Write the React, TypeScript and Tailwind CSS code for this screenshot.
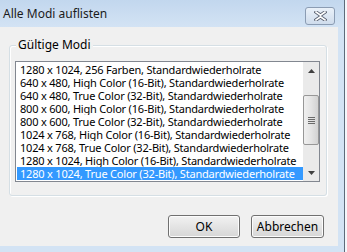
import React from "react";

const modes = [
  "1280 x 1024, 256 Farben, Standardwiederholrate",
  "640 x 480, High Color (16-Bit), Standardwiederholrate",
  "640 x 480, True Color (32-Bit), Standardwiederholrate",
  "800 x 600, High Color (16-Bit), Standardwiederholrate",
  "800 x 600, True Color (32-Bit), Standardwiederholrate",
  "1024 x 768, High Color (16-Bit), Standardwiederholrate",
  "1024 x 768, True Color (32-Bit), Standardwiederholrate",
  "1280 x 1024, High Color (16-Bit), Standardwiederholrate",
  "1280 x 1024, True Color (32-Bit), Standardwiederholrate",
];

const font = { fontFamily: '"Noto Sans", "Open Sans", sans-serif' };

export default function App() {
  return (
    <div
      className="flex h-[252px] w-[347px] overflow-hidden bg-white text-[12px] text-black"
      style={font}
    >
      <div className="flex w-[344px] flex-col bg-[#d3e3f4]">
        {/* title bar */}
        <div className="flex h-[27px] items-start bg-gradient-to-b from-[#c2d7ee] to-[#d3e3f4] pl-[3px]">
          <span className="mt-[6px] text-[12px] leading-[15px] text-[#1b1b1b]">Alle Modi auflisten</span>
          <div className="ml-auto mr-[9px] mt-[7px] flex h-[18px] w-[30px] items-center justify-center rounded-[3px] border border-[#8b9cb3] bg-gradient-to-b from-[#eaf1f9] to-[#cfdcec]">
            <svg width="13" height="10" viewBox="0 0 13 10">
              <path
                d="M2 1 L6.5 4.2 L11 1 M2 9 L6.5 5.8 L11 9"
                stroke="#5a6272"
                strokeWidth="3.4"
                fill="none"
                strokeLinecap="square"
              />
              <path
                d="M2 1 L6.5 4.2 L11 1 M2 9 L6.5 5.8 L11 9"
                stroke="#ffffff"
                strokeWidth="1.6"
                fill="none"
                strokeLinecap="square"
              />
            </svg>
          </div>
        </div>
        {/* client */}
        <div className="flex h-[219px] w-[338px] flex-col bg-[#f0f0f0]">
          {/* group box */}
          <div className="relative ml-[9px] mt-[18px] h-[151px] w-[318px] rounded-[3px] border border-[#d5dfe5] shadow-[inset_1px_1px_0_#ffffff,1px_1px_0_#ffffff]">
            <span className="absolute left-[6px] top-[-9px] bg-[#f0f0f0] px-[2px] text-[12px] leading-[15px] text-black">
              Gültige Modi
            </span>
            <div className="ml-[5px] mt-[15px] flex h-[121px] w-[305px] border border-[#828790] bg-white">
              <div className="flex flex-1 flex-col overflow-hidden py-[1px] pl-[1px]">
                {modes.map((m, i) => {
                  const sel = i === modes.length - 1;
                  return (
                    <div
                      key={i}
                      className={
                        sel
                          ? "h-[13px] overflow-hidden whitespace-nowrap bg-[#3399ff] pl-[3px] text-[11px] leading-[13px] tracking-[-0.2px] text-white"
                          : "h-[13px] overflow-hidden whitespace-nowrap pl-[3px] text-[11px] leading-[13px] tracking-[-0.2px] text-black"
                      }
                    >
                      {m}
                    </div>
                  );
                })}
              </div>
              {/* scrollbar */}
              <div className="flex w-[16px] flex-col bg-[#eaeaea]">
                <div className="flex h-[17px] items-center justify-center">
                  <svg width="7" height="4" viewBox="0 0 7 4">
                    <path d="M0 4 L3.5 0 L7 4 Z" fill="#404040" />
                  </svg>
                </div>
                <div className="mt-[16px] flex h-[50px] items-center justify-center rounded-[2px] border border-[#979797] bg-gradient-to-r from-[#f0f0f0] via-[#e4e4e4] to-[#d2d2d2]">
                  <div className="flex flex-col gap-[1px]">
                    <div className="h-[1px] w-[7px] bg-[#6a6a6a]" />
                    <div className="h-[1px] w-[7px] bg-[#6a6a6a]" />
                    <div className="h-[1px] w-[7px] bg-[#6a6a6a]" />
                    <div className="h-[1px] w-[7px] bg-[#6a6a6a]" />
                  </div>
                </div>
                <div className="mt-auto flex h-[17px] items-center justify-center">
                  <svg width="7" height="4" viewBox="0 0 7 4">
                    <path d="M0 0 L3.5 4 L7 0 Z" fill="#404040" />
                  </svg>
                </div>
              </div>
            </div>
          </div>
          {/* buttons */}
          <div className="mt-[19px] flex justify-end gap-[11px] pr-[14px]">
            <button className="h-[23px] w-[72px] rounded-[3px] border border-[#707070] bg-gradient-to-b from-[#f2f2f2] to-[#d6d6d6] text-[12px] text-black shadow-[inset_0_0_0_1px_#fcfcfc]">
              OK
            </button>
            <button className="h-[23px] w-[73px] rounded-[3px] border border-[#707070] bg-gradient-to-b from-[#f2f2f2] to-[#d6d6d6] text-[12px] text-black shadow-[inset_0_0_0_1px_#fcfcfc]">
              Abbrechen
            </button>
          </div>
        </div>
      </div>
      <div className="w-[1px] bg-[#5d6b7a]" />
      <div className="w-[2px] bg-[#f4f7fb]" />
    </div>
  );
}
